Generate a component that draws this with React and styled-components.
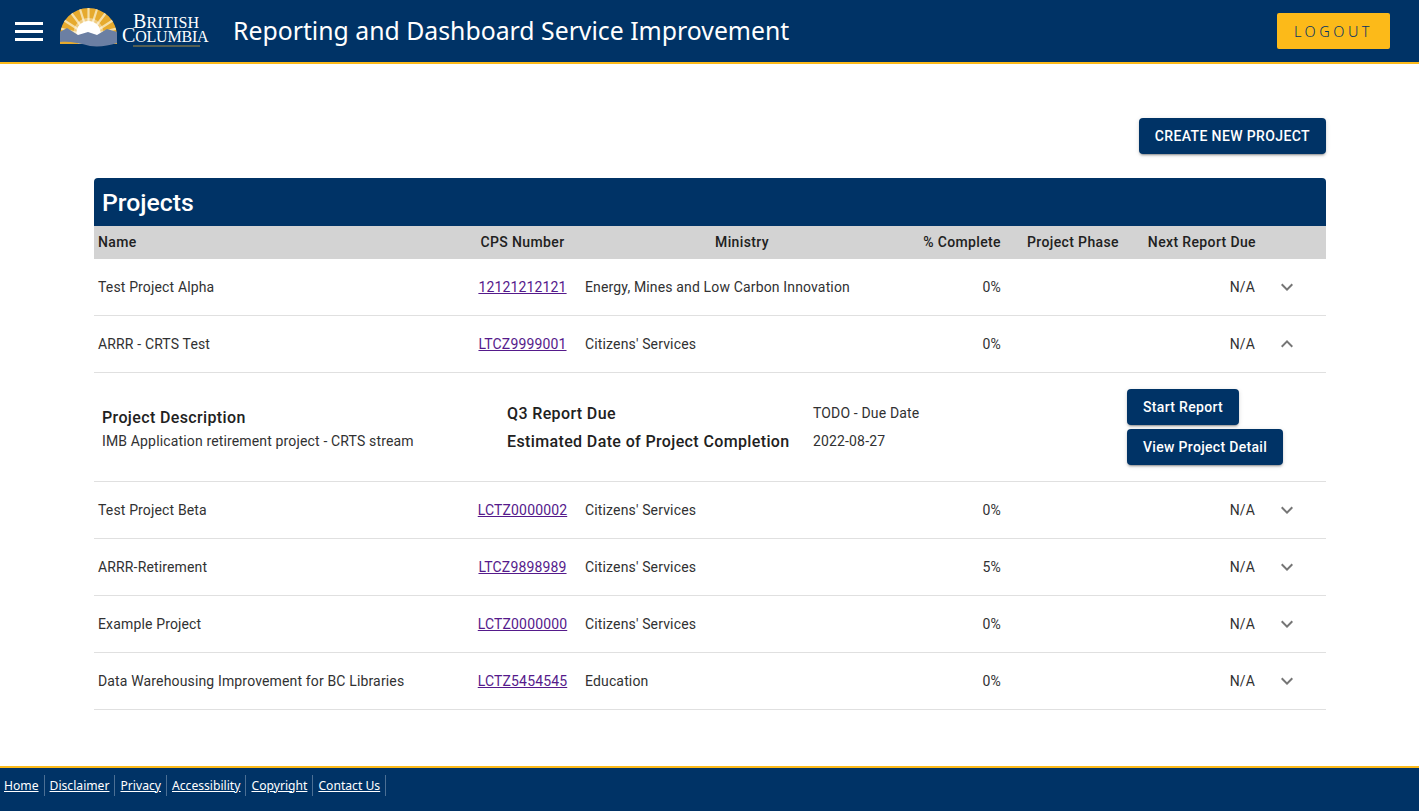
import React from "react";
import styled, { createGlobalStyle } from "styled-components";

const GlobalStyle = createGlobalStyle`
  html, body {
    margin: 0;
    padding: 0;
    background: #fff;
    font-family: Roboto, "Liberation Sans", sans-serif;
    color: #313132;
  }
`;

const Page = styled.div`
  display: flex;
  flex-direction: column;
  min-height: 811px;
`;

const Header = styled.header`
  display: flex;
  align-items: center;
  height: 62px;
  background: #003366;
  border-bottom: 2px solid #fcba19;
  padding: 0 29px 0 15px;
`;

const MenuButton = styled.button`
  display: flex;
  flex-direction: column;
  gap: 5px;
  width: 28px;
  padding: 0;
  margin-right: 16px;
  border: 0;
  background: none;
  & > span {
    height: 3px;
    background: #fff;
  }
`;

const HeaderTitle = styled.h1`
  margin: 0 0 2px 22px;
  flex: 1;
  font: 400 24.8px "Noto Sans", sans-serif;
  color: #fff;
`;

const LogoutButton = styled.button`
  width: 113px;
  height: 36px;
  border: 0;
  border-radius: 2px;
  background: #fcba19;
  color: #003366;
  font: 300 14.5px "Noto Sans", sans-serif;
  letter-spacing: 3.5px;
`;

const Main = styled.main`
  flex: 1;
  padding: 54px 93px 56px 94px;
`;

const Actions = styled.div`
  display: flex;
  justify-content: flex-end;
  margin-bottom: 24px;
`;

const Button = styled.button`
  height: 36px;
  padding: 0 16px;
  border: 0;
  border-radius: 4px;
  background: #003366;
  color: #fff;
  font: 500 14px Roboto, sans-serif;
  letter-spacing: ${(p) => (p.$upper ? "0.38px" : "0.32px")};
  text-transform: ${(p) => (p.$upper ? "uppercase" : "none")};
  box-shadow: 0 3px 1px -2px rgba(0, 0, 0, 0.2), 0 2px 2px 0 rgba(0, 0, 0, 0.14),
    0 1px 5px 0 rgba(0, 0, 0, 0.12);
`;

const TableTitle = styled.h2`
  margin: 0;
  height: 48px;
  padding-left: 8px;
  border-radius: 4px 4px 0 0;
  background: #003366;
  color: #fff;
  font: 500 24.8px/50px Roboto, sans-serif;
`;

const Row = styled.div`
  display: grid;
  grid-template-columns: 380px 97px 342px 92px 136px 119px 54px 12px;
  align-items: center;
`;

const HeadRow = styled(Row)`
  height: 31px;
  padding-bottom: 2px;
  background: #d3d3d3;
  font-size: 14px;
  font-weight: 500;
  color: #212121;
  letter-spacing: 0.37px;
`;

const BodyRow = styled(Row)`
  height: 56px;
  border-bottom: 1px solid #e0e0e0;
  font-size: 14px;
  letter-spacing: 0.15px;
`;

const Cell = styled.div`
  text-align: ${(p) => p.$align || "left"};
  padding: ${(p) => p.$pad || "0 4px"};
  white-space: nowrap;
`;

const CpsLink = styled.a`
  color: #551a8b;
  text-decoration: underline;
`;

const Toggle = styled.div`
  display: flex;
  justify-content: center;
`;

const ToggleIcon = styled.svg`
  width: 24px;
  height: 24px;
  fill: rgba(0, 0, 0, 0.54);
`;

const Detail = styled.div`
  display: grid;
  grid-template-columns: 405px 306px 314px 1fr;
  height: 108px;
  border-bottom: 1px solid #e0e0e0;
  padding-left: 8px;
`;

const DescBlock = styled.div`
  padding-top: 35px;
`;

const DetailHeading = styled.div`
  font-size: 16px;
  font-weight: 500;
  line-height: 19px;
  letter-spacing: 0.37px;
  color: #212121;
  margin-bottom: ${(p) => p.$gap || 0};
`;

const DetailText = styled.div`
  font-size: 14px;
  line-height: 19px;
  letter-spacing: 0.15px;
  margin-bottom: ${(p) => p.$gap || 0};
`;

const DatesBlock = styled.div`
  padding-top: 31px;
`;

const ButtonStack = styled.div`
  display: flex;
  flex-direction: column;
  align-items: flex-start;
  gap: 4px;
  padding-top: 16px;
`;

const Footer = styled.footer`
  height: 43px;
  background: #003366;
  border-top: 2px solid #fcba19;
  display: flex;
  align-items: center;
`;

const FooterLinks = styled.nav`
  display: flex;
  margin-top: -9px;
`;

const FooterLink = styled.a`
  color: #fff;
  font: 400 12.15px "Noto Sans", sans-serif;
  text-decoration: underline;
  padding: 2px 5px 2px 5px;
  border-right: 1px solid #4b6f94;
  &:first-child {
    padding-left: 4px;
  }
`;

const Logo = () => (
  <svg width="152" height="50" viewBox="0 0 152 50" aria-label="British Columbia">
    <defs>
      <clipPath id="sun">
        <path d="M1 30.500A28.500 28.500 0 0 1 58 30.500V38H1Z" />
      </clipPath>
    </defs>
    <g clipPath="url(#sun)">
      <rect x="0" y="0" width="60" height="40" fill="#e6aa2e" />
      <g stroke="#f6dfa6" strokeWidth="2.200">
        <path d="M29.500 30L29.500 0M29.500 30L20 0M29.500 30L39 0M29.500 30L10 4M29.500 30L49 4M29.500 30L3 13M29.500 30L56 13M29.500 30L0 22M29.500 30L59 22" />
      </g>
      <circle cx="29.500" cy="27" r="12" fill="#fff" />
      <circle cx="29.500" cy="27" r="15" fill="#fff" opacity="0.4" />
    </g>
    <path
      d="M1 26L8 22L19 29L29 26L38 29L48 23L58 26V37C49 40 40 41 31 40C20 37 10 35 1 36Z"
      fill="#6b7fa3"
    />
    <g fontFamily='"Liberation Serif", serif' fill="#fff">
      <text x="74" y="22" fontSize="20" letterSpacing="0.2">
        B<tspan fontSize="16">RITISH</tspan>
      </text>
      <text x="63" y="36" fontSize="20" letterSpacing="-0.2">
        C<tspan fontSize="16">OLUMBIA</tspan>
      </text>
    </g>
    <rect x="74" y="39.500" width="67" height="1" fill="#a98c3f" />
  </svg>
);

const projects = [
  { name: "Test Project Alpha", cps: "12121212121", ministry: "Energy, Mines and Low Carbon Innovation", pct: "0%" },
  { name: "ARRR - CRTS Test", cps: "LTCZ9999001", ministry: "Citizens' Services", pct: "0%", open: true },
  { name: "Test Project Beta", cps: "LCTZ0000002", ministry: "Citizens' Services", pct: "0%" },
  { name: "ARRR-Retirement", cps: "LTCZ9898989", ministry: "Citizens' Services", pct: "5%" },
  { name: "Example Project", cps: "LCTZ0000000", ministry: "Citizens' Services", pct: "0%" },
  { name: "Data Warehousing Improvement for BC Libraries", cps: "LCTZ5454545", ministry: "Education", pct: "0%" },
];

const footerLinks = ["Home", "Disclaimer", "Privacy", "Accessibility", "Copyright", "Contact Us"];

const ProjectRow = ({ project }) => (
  <>
    <BodyRow>
      <Cell>{project.name}</Cell>
      <Cell $align="center" $pad="0">
        <CpsLink href="#">{project.cps}</CpsLink>
      </Cell>
      <Cell $pad="0 0 0 14px">{project.ministry}</Cell>
      <Cell $align="right">{project.pct}</Cell>
      <Cell />
      <Cell $align="right" $pad="0 5px 0 0">N/A</Cell>
      <Toggle>
        <ToggleIcon viewBox="0 0 24 24">
          <path
            d={
              project.open
                ? "M12 8l-6 6 1.410 1.410L12 10.830l4.590 4.580L18 14z"
                : "M16.590 8.590 12 13.170 7.410 8.590 6 10l6 6 6-6z"
            }
          />
        </ToggleIcon>
      </Toggle>
    </BodyRow>
    {project.open && (
      <Detail>
        <DescBlock>
          <DetailHeading $gap="5px">Project Description</DetailHeading>
          <DetailText>IMB Application retirement project - CRTS stream</DetailText>
        </DescBlock>
        <DatesBlock>
          <DetailHeading $gap="9px">Q3 Report Due</DetailHeading>
          <DetailHeading>Estimated Date of Project Completion</DetailHeading>
        </DatesBlock>
        <DatesBlock>
          <DetailText $gap="9px">TODO - Due Date</DetailText>
          <DetailText>2022-08-27</DetailText>
        </DatesBlock>
        <ButtonStack>
          <Button>Start Report</Button>
          <Button>View Project Detail</Button>
        </ButtonStack>
      </Detail>
    )}
  </>
);

export default function App() {
  return (
    <Page>
      <GlobalStyle />
      <Header>
        <MenuButton aria-label="Menu">
          <span />
          <span />
          <span />
        </MenuButton>
        <Logo />
        <HeaderTitle>Reporting and Dashboard Service Improvement</HeaderTitle>
        <LogoutButton>LOGOUT</LogoutButton>
      </Header>
      <Main>
        <Actions>
          <Button $upper>Create New Project</Button>
        </Actions>
        <TableTitle>Projects</TableTitle>
        <HeadRow>
          <Cell>Name</Cell>
          <Cell $align="center" $pad="0">CPS Number</Cell>
          <Cell $align="center" $pad="0">Ministry</Cell>
          <Cell $align="right">% Complete</Cell>
          <Cell $align="center" $pad="0">Project Phase</Cell>
          <Cell $align="right" $pad="0 4px 0 0">Next Report Due</Cell>
        </HeadRow>
        {projects.map((p) => (
          <ProjectRow key={p.cps} project={p} />
        ))}
      </Main>
      <Footer>
        <FooterLinks>
          {footerLinks.map((l) => (
            <FooterLink key={l} href="#">{l}</FooterLink>
          ))}
        </FooterLinks>
      </Footer>
    </Page>
  );
}
